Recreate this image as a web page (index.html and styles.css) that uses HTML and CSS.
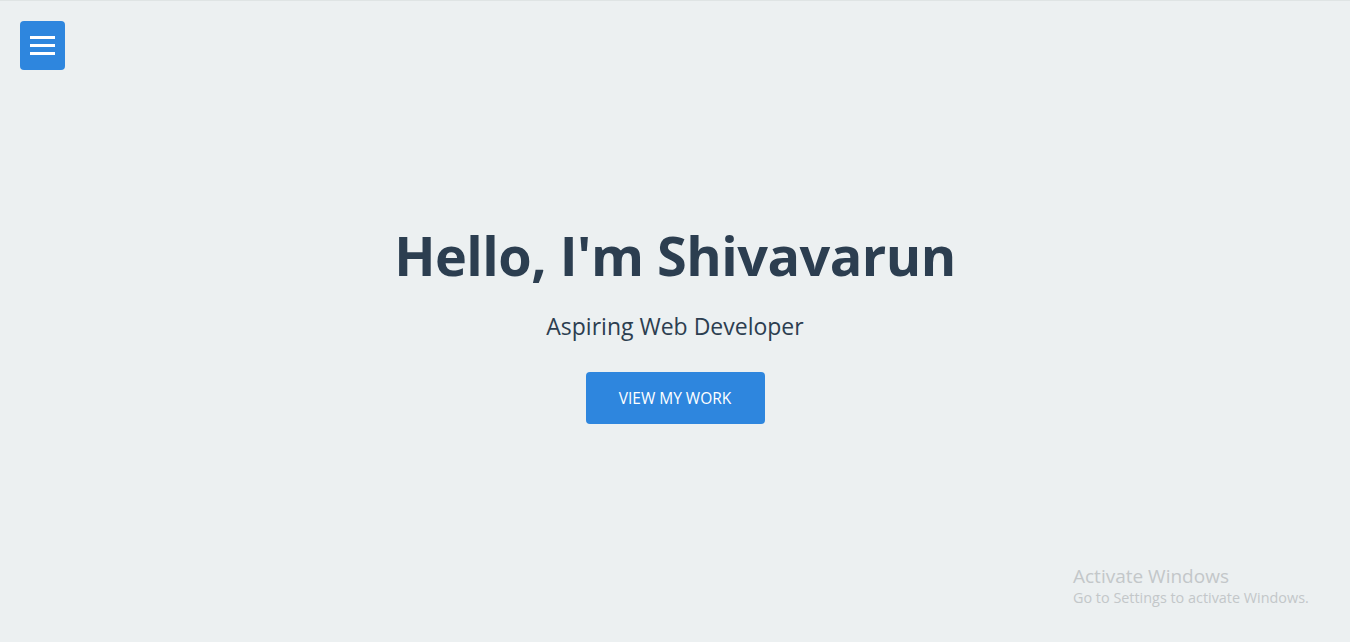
FILE: index.html
```html
<!DOCTYPE html>
<html lang="en">
<head>
<meta charset="utf-8">
<title>Shivavarun</title>
<link rel="stylesheet" href="styles.css">
</head>
<body>
<button class="menu-toggle" aria-label="Menu">
  <span class="bar"></span><span class="bar"></span><span class="bar"></span>
</button>
<main class="hero">
  <h1 class="hero-title">Hello, I'm Shivavarun</h1>
  <p class="hero-subtitle">Aspiring Web Developer</p>
  <a class="hero-btn" href="#work">VIEW MY WORK</a>
</main>
<div class="watermark">
  <div class="wm-title">Activate Windows</div>
  <div class="wm-sub">Go to Settings to activate Windows.</div>
</div>
</body>
</html>
```
FILE: styles.css
```css
* { box-sizing: border-box; }
html, body { margin: 0; padding: 0; }
body {
  background: #ecf0f1;
  color: #2c3e50;
  font-family: "Open Sans", "Noto Sans", sans-serif;
  border-top: 1px solid #dfe4e4;
  min-height: 100vh;
  overflow: hidden;
}
.menu-toggle {
  position: absolute;
  left: 20px;
  top: 21px;
  width: 45px;
  height: 49px;
  background: #2e86de;
  border: none;
  border-radius: 4px;
  display: flex;
  flex-direction: column;
  align-items: center;
  justify-content: center;
  gap: 5px;
  padding: 0;
}
.bar {
  display: block;
  width: 25px;
  height: 3px;
  background: #fff;
}
.hero {
  min-height: 641px;
  display: flex;
  flex-direction: column;
  align-items: center;
  justify-content: center;
  text-align: center;
}
.hero-title {
  margin: 0;
  font-size: 54px;
  font-weight: 700;
  line-height: 70px;
  letter-spacing: -0.5px;
}
.hero-subtitle {
  margin: 21px 0 0;
  font-size: 23px;
  line-height: 30px;
}
.hero-btn {
  margin-top: 31px;
  display: inline-flex;
  align-items: center;
  justify-content: center;
  width: 179px;
  height: 52px;
  background: #2e86de;
  color: #fff;
  border-radius: 4px;
  text-decoration: none;
  font-size: 15.5px;
}
.watermark {
  position: absolute;
  left: 1073px;
  top: 564px;
  color: #c3c7c9;
}
.wm-title { font-size: 19px; line-height: 24px; }
.wm-sub { font-size: 14.4px; line-height: 20px; }
```
